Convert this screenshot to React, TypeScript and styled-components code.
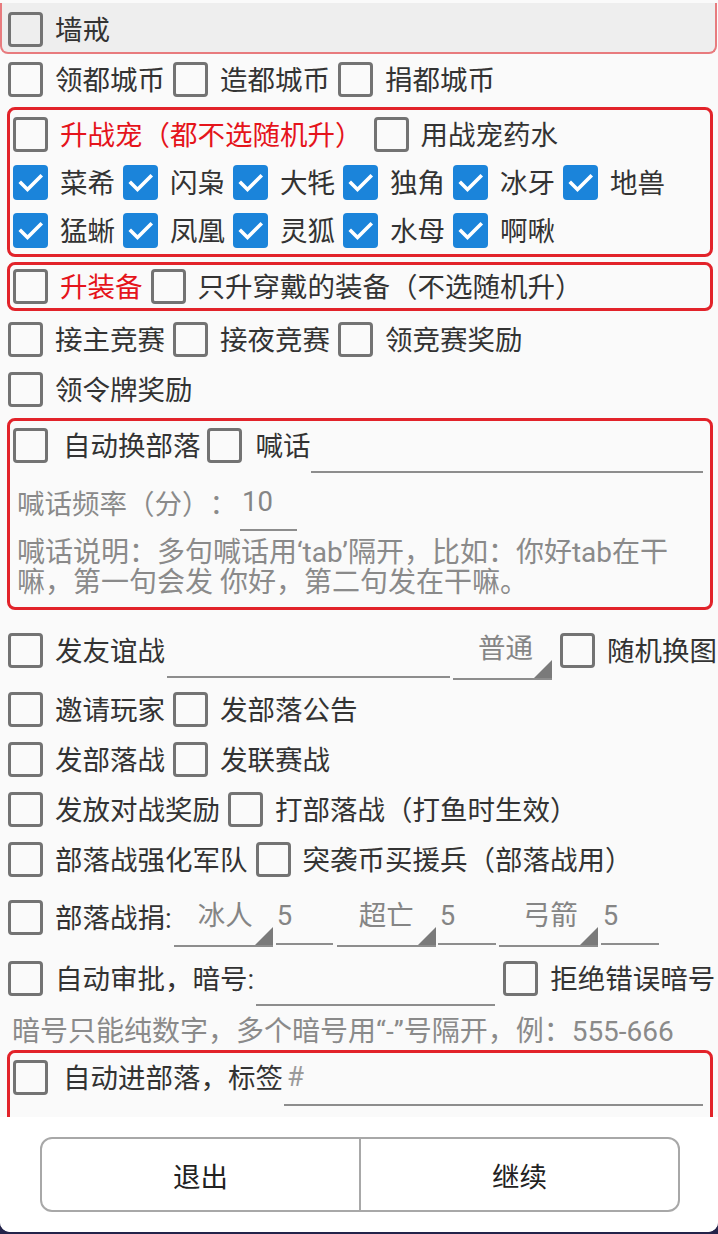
import styled, { createGlobalStyle } from "styled-components"

const GlobalStyle = createGlobalStyle`
  *, *::before, *::after { box-sizing: border-box; }
  html, body {
    margin: 0;
    padding: 0;
    background: #23234a;
    overflow: hidden;
  }
  body {
    font-family: Roboto, "Noto Sans CJK SC", sans-serif;
    text-spacing-trim: space-all;
  }
`

const PETS_1 = ["菜希", "闪枭", "大牦", "独角", "冰牙", "地兽"]
const PETS_2 = ["猛蜥", "凤凰", "灵狐", "水母", "啊啾"]

interface CheckProps {
  label: string
  checked?: boolean
  red?: boolean
  gap?: number
  mr?: number
}

function Check({ label, checked, red, gap, mr }: CheckProps) {
  return (
    <Item $gap={gap} $mr={mr}>
      {checked ? (
        <CheckedBox>
          <svg width="35" height="35" viewBox="0 0 35 35">
            <polyline
              points="8,18 14.5,24.5 27.5,11.5"
              fill="none"
              stroke="#fff"
              strokeWidth="3.6"
              strokeLinecap="square"
            />
          </svg>
        </CheckedBox>
      ) : (
        <EmptyBox />
      )}
      <Label $red={red}>{label}</Label>
    </Item>
  )
}

function App() {
  return (
    <>
      <GlobalStyle />
      <Screen>
        <Scroll>
          <TopBar>
            <Check label="墙戒" />
          </TopBar>

          <Row>
            <Check label="领都城币" />
            <Check label="造都城币" />
            <Check label="捐都城币" />
          </Row>

          <RedBox $mt={3}>
            <Row $h={48} $pl={0}>
              <Check label="升战宠（都不选随机升）" red mr={11} />
              <Check label="用战宠药水" />
            </Row>
            <Row $h={48} $pl={0}>
              {PETS_1.map((p) => (
                <Check key={p} label={p} checked />
              ))}
            </Row>
            <Row $h={48} $pl={0}>
              {PETS_2.map((p) => (
                <Check key={p} label={p} checked />
              ))}
            </Row>
          </RedBox>

          <RedBox $mt={5}>
            <Row $h={43} $pl={0}>
              <Check label="升装备" red />
              <Check label="只升穿戴的装备（不选随机升）" />
            </Row>
          </RedBox>

          <Row $mt={3}>
            <Check label="接主竞赛" />
            <Check label="接夜竞赛" />
            <Check label="领竞赛奖励" />
          </Row>
          <Row>
            <Check label="领令牌奖励" />
          </Row>

          <RedBox $mt={4} $pb={9}>
            <Row $h={48} $pl={0}>
              <Check label="自动换部落" gap={15} mr={6} />
              <Check label="喊话" gap={14} mr={0} />
              <Field $grow $mr={7} />
            </Row>
            <Row $h={50} $pl={4} $mt={9}>
              <Hint>喊话频率（分）：</Hint>
              <Field $w={57} $ml={3} $pl={2}>10</Field>
            </Row>
            <Desc>
              喊话说明：多句喊话用‘tab’隔开，比如：你好tab在干
              <br />
              嘛，第一句会发 你好，第二句发在干嘛。
            </Desc>
          </RedBox>

          <Row $h={52} $mt={14}>
            <Check label="发友谊战" mr={2} />
            <Field $w={283} />
            <Spinner $w={99} $ml={3} $pl={25}>普通</Spinner>
            <SpacedCheck>
              <Check label="随机换图" />
            </SpacedCheck>
          </Row>

          <Row $mt={8}>
            <Check label="邀请玩家" />
            <Check label="发部落公告" />
          </Row>
          <Row>
            <Check label="发部落战" />
            <Check label="发联赛战" />
          </Row>
          <Row>
            <Check label="发放对战奖励" />
            <Check label="打部落战（打鱼时生效）" />
          </Row>
          <Row>
            <Check label="部落战强化军队" />
            <Check label="突袭币买援兵（部落战用）" />
          </Row>

          <Row $mt={8}>
            <Check label="部落战捐:" mr={2} />
            <Spinner $w={99} $pl={24}>冰人</Spinner>
            <Field $w={57} $ml={3} $pl={1}>5</Field>
            <Spinner $w={99} $ml={4} $pl={22}>超亡</Spinner>
            <Field $w={58} $ml={2} $pl={2}>5</Field>
            <Spinner $w={99} $ml={3} $pl={24}>弓箭</Spinner>
            <Field $w={58} $ml={3} $pl={2}>5</Field>
          </Row>

          <Row $mt={11}>
            <Check label="自动审批，暗号:" mr={2} />
            <Field $w={239} />
            <SpacedCheck>
              <Check label="拒绝错误暗号" />
            </SpacedCheck>
          </Row>

          <Row $h={36} $mt={9} $pl={12}>
            <Hint $size={28}>暗号只能纯数字，多个暗号用“-”号隔开，例：555-666</Hint>
          </Row>

          <RedBox $mt={2} $pb={30}>
            <Row $h={49} $pl={0}>
              <Check label="自动进部落，标签" gap={15} mr={1} />
              <Field $grow $mr={7} $pl={3} $light>#</Field>
            </Row>
          </RedBox>
        </Scroll>

        <Footer>
          <ButtonGroup>
            <FooterButton>退出</FooterButton>
            <FooterButton>继续</FooterButton>
          </ButtonGroup>
        </Footer>
      </Screen>
    </>
  )
}

export default App

const Screen = styled.div`
  width: 718px;
  height: 1232px;
  display: flex;
  flex-direction: column;
  background: #fafafa;
  border-radius: 0 0 10px 10px;
  overflow: hidden;
`

const Scroll = styled.div`
  flex: 1;
  min-height: 0;
  overflow: hidden;
`

const TopBar = styled.div`
  margin: 3px 1px 0 0;
  height: 51px;
  padding: 4px 0 0 8px;
  display: flex;
  align-items: center;
  background: #eeeeee;
  border: 2px solid #e87b7e;
  border-top: none;
  border-radius: 0 0 8px 8px;
  & > label {
    margin-left: -2px;
  }
`

interface RowProps {
  $h?: number
  $pl?: number
  $mt?: number
}

const Row = styled.div<RowProps>`
  display: flex;
  align-items: center;
  height: ${(p) => p.$h ?? 50}px;
  padding-left: ${(p) => p.$pl ?? 8}px;
  margin-top: ${(p) => p.$mt ?? 0}px;
  white-space: nowrap;
  flex-shrink: 0;
`

interface RedBoxProps {
  $mt?: number
  $pb?: number
}

const RedBox = styled.div<RedBoxProps>`
  margin: ${(p) => p.$mt ?? 0}px 5px 0 7px;
  padding: 0 0 ${(p) => p.$pb ?? 0}px 3px;
  border: 3px solid #e2232a;
  border-radius: 8px;
`

const Item = styled.label<{ $gap?: number; $mr?: number }>`
  display: flex;
  align-items: center;
  gap: ${(p) => p.$gap ?? 12}px;
  margin-right: ${(p) => p.$mr ?? 8}px;
  flex-shrink: 0;
`

const EmptyBox = styled.span`
  width: 35px;
  height: 35px;
  border: 3.3px solid #737373;
  border-radius: 4px;
  flex-shrink: 0;
`

const CheckedBox = styled.span`
  width: 35px;
  height: 35px;
  border-radius: 4px;
  background: #1b84da;
  flex-shrink: 0;
  display: flex;
  svg {
    display: block;
  }
`

const Label = styled.span<{ $red?: boolean }>`
  font-size: 27.5px;
  line-height: 1;
  padding-top: 3px;
  color: ${(p) => (p.$red ? "#e5141b" : "#333333")};
`

const SpacedCheck = styled.div`
  margin-left: 8px;
  display: flex;
`

interface FieldProps {
  $w?: number
  $grow?: boolean
  $ml?: number
  $mr?: number
  $pl?: number
  $light?: boolean
}

const Field = styled.div<FieldProps>`
  display: flex;
  align-items: center;
  height: 56px;
  flex: ${(p) => (p.$grow ? "1 1 auto" : "0 0 auto")};
  width: ${(p) => (p.$w ? `${p.$w}px` : "auto")};
  margin-left: ${(p) => p.$ml ?? 0}px;
  margin-right: ${(p) => p.$mr ?? 0}px;
  padding-left: ${(p) => p.$pl ?? 0}px;
  border-bottom: 2px solid #8d8d8d;
  font-size: 27.5px;
  line-height: 1;
  color: ${(p) => (p.$light ? "#9a9a9a" : "#858585")};
`

const Spinner = styled(Field)`
  position: relative;
  height: 60px;

  &::after {
    content: "";
    position: absolute;
    right: 0;
    bottom: 0;
    width: 0;
    height: 0;
    border-left: 18px solid transparent;
    border-bottom: 18px solid #7a7a7a;
  }
`

const Hint = styled.span<{ $size?: number }>`
  font-size: ${(p) => p.$size ?? 27.5}px;
  line-height: 1;
  padding-top: 3px;
  color: #8a8a8a;
`

const Desc = styled.div`
  margin-top: 10px;
  padding-left: 4px;
  font-size: 28px;
  line-height: 30px;
  color: #8a8a8a;
  white-space: nowrap;
`

const Footer = styled.div`
  flex-shrink: 0;
  height: 115px;
  padding: 20px 38px 20px 40px;
  background: #ffffff;
  display: flex;
`

const ButtonGroup = styled.div`
  flex: 1;
  display: flex;
  border: 2px solid #a8a8a8;
  border-radius: 12px;
  overflow: hidden;
`

const FooterButton = styled.button`
  flex: 1;
  background: transparent;
  border: none;
  font-family: inherit;
  font-size: 27.5px;
  color: #222222;
  padding: 0;

  & + & {
    border-left: 2px solid #a8a8a8;
  }
`
